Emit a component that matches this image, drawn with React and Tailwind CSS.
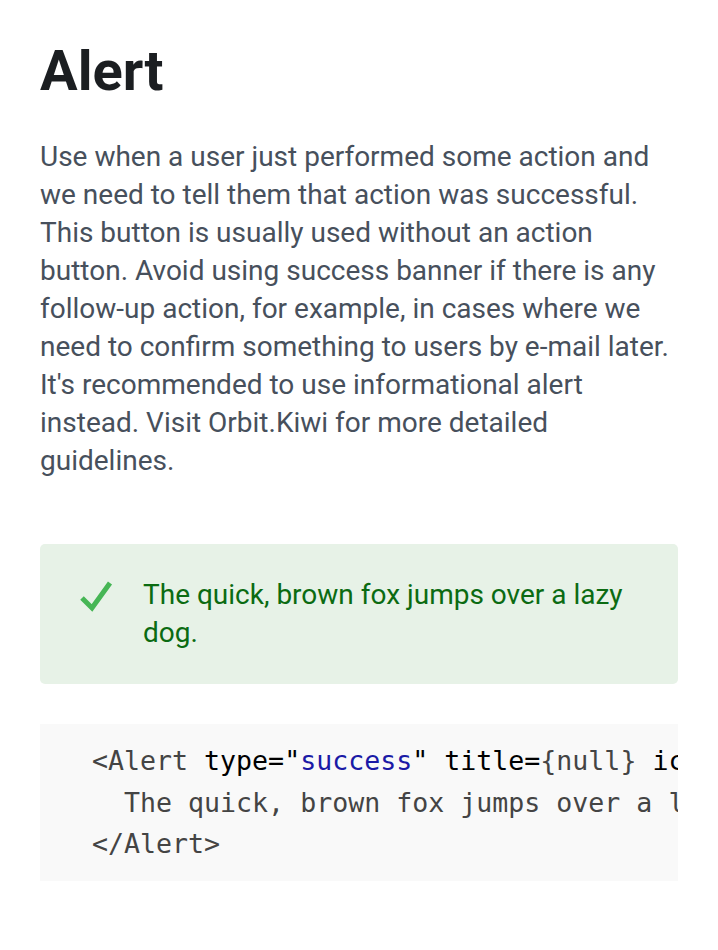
export default function App() {
  return (
    <div className="min-h-[950px] bg-white px-10 pt-[31px] font-['Roboto',sans-serif]">
      <h1 className="text-[56px] font-bold leading-[80px] text-[#1b1e21]">Alert</h1>
      <p className="mt-[27px] text-[28px] leading-[38px] text-[#47505c]">
        Use when a user just performed some action and we need to tell them that action was
        successful. This button is usually used without an action button. Avoid using success
        banner if there is any follow-up action, for example, in cases where we need to confirm
        something to users by e-mail later. It's recommended to use informational alert instead.
        Visit Orbit.Kiwi for more detailed guidelines.
      </p>

      <div className="mt-[64px] flex items-start gap-[29px] rounded-[5px] bg-[#e7f2e7] py-[32px] pl-[38px] pr-6">
        <CheckIcon />
        <div className="text-[28px] leading-[38px] text-[#0b6b12]">
          The quick, brown fox jumps over a lazy dog.
        </div>
      </div>

      <pre className="mt-[40px] overflow-hidden bg-[#f9f9f9] py-[16px] pl-[52px] font-['DejaVu_Sans_Mono',monospace] text-[26.6px] leading-[41.5px] text-[#444]">
        <div>
          {'<Alert '}
          <span className="text-black">type=&quot;</span>
          <span className="text-[#1a1aa6]">success</span>
          <span className="text-black">&quot; title=</span>
          <span>{'{null}'}</span>
          <span className="text-black"> icon=</span>
          <span>{'{true}>'}</span>
        </div>
        <div>{'  The quick, brown fox jumps over a lazy dog.'}</div>
        <div>{'</Alert>'}</div>
      </pre>
    </div>
  );
}

function CheckIcon() {
  return (
    <svg className="mt-[2px] h-[36px] w-[36px] shrink-0" viewBox="0 0 36 36" fill="none">
      <path
        d="M4 24 L14 34 L32 9"
        transform="translate(0,-4)"
        stroke="#46b655"
        strokeWidth="5"
        strokeLinecap="butt"
        strokeLinejoin="miter"
      />
    </svg>
  );
}
